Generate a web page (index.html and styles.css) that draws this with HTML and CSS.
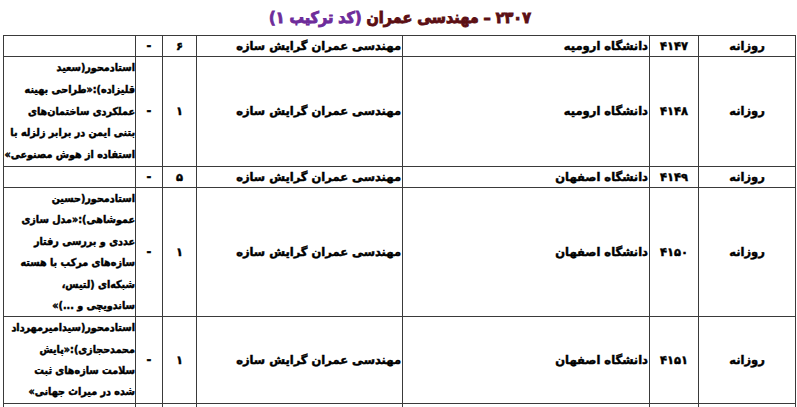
FILE: index.html
```html
<!DOCTYPE html>
<html lang="fa" dir="rtl">
<head>
<meta charset="utf-8">
<link rel="stylesheet" href="styles.css">
</head>
<body>
<div class="page">
  <h1 class="title"><span class="code-part">۲۳۰۷ – مهندسی عمران</span> <span class="combo">(کد ترکیب ۱)</span></h1>
  <table class="grid">
    <colgroup>
      <col class="c-type"><col class="c-code"><col class="c-uni"><col class="c-major"><col class="c-num"><col class="c-dash"><col class="c-desc">
    </colgroup>
    <tr class="r-short">
      <td class="center">روزانه</td>
      <td class="center">۴۱۴۷</td>
      <td class="start">دانشگاه ارومیه</td>
      <td class="start">مهندسی عمران گرایش سازه</td>
      <td class="center">۶</td>
      <td class="center">-</td>
      <td class="start"></td>
    </tr>
    <tr class="r-a">
      <td class="center">روزانه</td>
      <td class="center">۴۱۴۸</td>
      <td class="start">دانشگاه ارومیه</td>
      <td class="start">مهندسی عمران گرایش سازه</td>
      <td class="center">۱</td>
      <td class="center">-</td>
      <td class="start desc">استادمحور(سعید<br>قلیزاده):«طراحی بهینه<br>عملکردی ساختمان‌های<br>بتنی ایمن در برابر زلزله با<br>استفاده از هوش مصنوعی»</td>
    </tr>
    <tr class="r-short">
      <td class="center">روزانه</td>
      <td class="center">۴۱۴۹</td>
      <td class="start">دانشگاه اصفهان</td>
      <td class="start">مهندسی عمران گرایش سازه</td>
      <td class="center">۵</td>
      <td class="center">-</td>
      <td class="start"></td>
    </tr>
    <tr class="r-b">
      <td class="center">روزانه</td>
      <td class="center">۴۱۵۰</td>
      <td class="start">دانشگاه اصفهان</td>
      <td class="start">مهندسی عمران گرایش سازه</td>
      <td class="center">۱</td>
      <td class="center">-</td>
      <td class="start desc">استادمحور(حسین<br>عموشاهی):«مدل سازی<br>عددی و بررسی رفتار<br>سازه‌های مرکب با هسته<br>شبکه‌ای (لتیس،<br>ساندویچی و ...)»</td>
    </tr>
    <tr class="r-c">
      <td class="center">روزانه</td>
      <td class="center">۴۱۵۱</td>
      <td class="start">دانشگاه اصفهان</td>
      <td class="start">مهندسی عمران گرایش سازه</td>
      <td class="center">۱</td>
      <td class="center">-</td>
      <td class="start desc">استادمحور(سیدامیرمهرداد<br>محمدحجازی):«پایش<br>سلامت سازه‌های ثبت<br>شده در میراث جهانی»</td>
    </tr>
    <tr class="r-tail">
      <td></td><td></td><td></td><td></td><td></td><td></td><td></td>
    </tr>
  </table>
</div>
</body>
</html>
```

FILE: styles.css
```css
html, body {
  margin: 0;
  padding: 0;
  background: #ffffff;
}
body {
  font-family: "DejaVu Sans", "Noto Sans", sans-serif;
  color: #000;
  overflow: hidden;
  height: 407px;
}
.page {
  width: 797px;
  padding: 0 1px 0 4px;
  box-sizing: border-box;
}
.title {
  margin: 0;
  height: 35px;
  line-height: 35px;
  text-align: center;
  font-family: "DejaVu Sans Condensed", "DejaVu Sans", sans-serif;
  font-size: 16px;
  font-weight: bold;
  -webkit-text-stroke: 0.9px currentColor;
}
.code-part { color: #5c0f14; }
.combo { color: #6e2c9a; }
.grid {
  width: 792px;
  border-collapse: collapse;
  table-layout: fixed;
  font-size: 11.5px;
  font-weight: bold;
}
.grid td {
  border: 1px solid #3a3a3a;
  padding: 0 1px;
  line-height: 20px;
  vertical-align: middle;
  white-space: nowrap;
  overflow: hidden;
  -webkit-text-stroke: 0.45px #000;
}
.grid td.desc {
  font-family: "DejaVu Sans Condensed", "DejaVu Sans", sans-serif;
  font-size: 10.7px;
  padding: 0 0 0 1px;
}
.r-a td.desc { line-height: 21.8px; }
.r-b td.desc { line-height: 21.4px; }
.r-c td.desc { line-height: 21.3px; }
.c-type { width: 97px; }
.c-code { width: 49px; }
.c-uni { width: 247px; }
.c-major { width: 206px; }
.c-num { width: 34px; }
.c-dash { width: 27px; }
.c-desc { width: 132px; }
.center { text-align: center; }
.start { text-align: right; }
.r-short td { height: 20px; }
.r-tail td { height: 30px; }
```
